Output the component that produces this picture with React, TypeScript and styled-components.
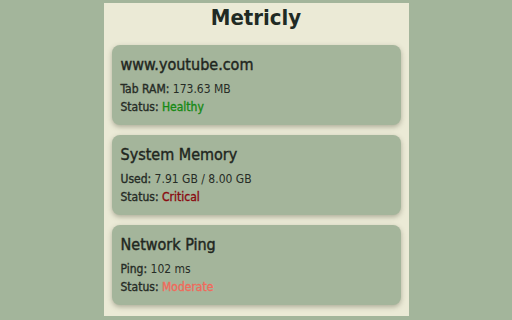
import styled, { createGlobalStyle } from 'styled-components'

const GlobalStyle = createGlobalStyle`
  html, body {
    margin: 0;
    padding: 0;
    background: #a3b59b;
  }
  body {
    font-family: "DejaVu Sans Condensed", "DejaVu Sans", sans-serif;
    font-stretch: condensed;
    color: #222a22;
  }
`

const Page = styled.div`
  width: 512px;
  height: 320px;
  display: flex;
  justify-content: center;
  padding-top: 3px;
  box-sizing: border-box;
`

const Panel = styled.main`
  width: 305px;
  height: 313px;
  background: #ebead6;
  padding: 0 8px;
  box-sizing: border-box;
  display: flex;
  flex-direction: column;
  gap: 10px;
`

const Title = styled.h1`
  margin: 0;
  height: 32px;
  font-size: 22px;
  font-weight: bold;
  text-align: center;
  line-height: 30px;
  color: #1f2a24;
`

const Card = styled.section`
  background: #a4b59b;
  border-radius: 8px;
  box-shadow: 0 2px 5px rgba(60, 60, 40, 0.35);
  height: 80px;
  padding: 10px 9px 0;
  box-sizing: border-box;
`

const CardTitle = styled.h2`
  margin: 0 0 5px;
  font-size: 16px;
  font-weight: normal;
  line-height: 20px;
  color: #1f2620;
  -webkit-text-stroke: 0.4px #1f2620;
`

const Line = styled.p`
  margin: 0;
  font-size: 12px;
  line-height: 18px;
  color: #262c26;
`

const Label = styled.span`
  -webkit-text-stroke: 0.35px #262c26;
`

const Status = styled.span<{ $tone: string }>`
  color: ${({ $tone }) => $tone};
  -webkit-text-stroke: 0.35px ${({ $tone }) => $tone};
`

const metrics = [
  { title: 'www.youtube.com', label: 'Tab RAM:', value: '173.63 MB', status: 'Healthy', tone: '#178a14' },
  { title: 'System Memory', label: 'Used:', value: '7.91 GB / 8.00 GB', status: 'Critical', tone: '#8a0a10' },
  { title: 'Network Ping', label: 'Ping:', value: '102 ms', status: 'Moderate', tone: '#f06a5c' },
]

export default function App() {
  return (
    <Page>
      <GlobalStyle />
      <Panel>
        <Title>Metricly</Title>
        {metrics.map((m) => (
          <Card key={m.title}>
            <CardTitle>{m.title}</CardTitle>
            <Line>
              <Label>{m.label}</Label> {m.value}
            </Line>
            <Line>
              <Label>Status:</Label> <Status $tone={m.tone}>{m.status}</Status>
            </Line>
          </Card>
        ))}
      </Panel>
    </Page>
  )
}
